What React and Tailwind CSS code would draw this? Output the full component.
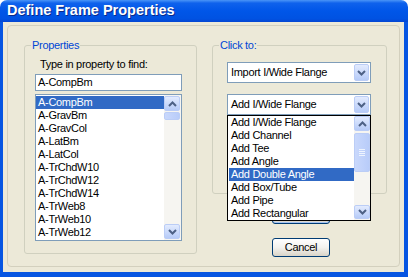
const propertyNames = [
  "A-CompBm",
  "A-GravBm",
  "A-GravCol",
  "A-LatBm",
  "A-LatCol",
  "A-TrChdW10",
  "A-TrChdW12",
  "A-TrChdW14",
  "A-TrWeb8",
  "A-TrWeb10",
  "A-TrWeb12",
];

const addShapes = [
  "Add I/Wide Flange",
  "Add Channel",
  "Add Tee",
  "Add Angle",
  "Add Double Angle",
  "Add Box/Tube",
  "Add Pipe",
  "Add Rectangular",
];

// little XP chevron used on scroll and combo buttons
function Chevron({ up }) {
  return (
    <svg width="9" height="6" viewBox="0 0 9 6">
      <path
        d={up ? "M1 5 L4.5 1.5 L8 5" : "M1 1 L4.5 4.5 L8 1"}
        fill="none"
        stroke="#4D6185"
        strokeWidth="2"
      />
    </svg>
  );
}

function ArrowBox({ up, className = "" }) {
  return (
    <div
      className={
        "flex items-center justify-center rounded-[2px] border border-[#BBCDF6] bg-linear-to-b from-[#E3EBFE] to-[#B6CBF8] " +
        className
      }
    >
      <Chevron up={up} />
    </div>
  );
}

function GroupBox({ title, className = "", children }) {
  return (
    <div className={"flex flex-col rounded-[3px] border border-[#D0D0BF] " + className}>
      <span className="-mt-[7px] ml-[6px] w-fit bg-[#ECE9D8] px-[1px] text-[11px] leading-[13px] text-[#0046D5]">
        {title}
      </span>
      {children}
    </div>
  );
}

function Combo({ text, className = "", children }) {
  return (
    <div
      className={
        "relative flex h-[21px] w-[144px] items-center border border-[#7F9DB9] bg-white pl-[3px] pr-[1px] " +
        className
      }
    >
      <span className="flex-1 text-[11px] leading-[13px]">{text}</span>
      <ArrowBox className="h-[17px] w-[15px]" />
      {children}
    </div>
  );
}

function XpButton({ label, className = "" }) {
  return (
    <div
      className={
        "flex h-[19px] w-[58px] items-center justify-center rounded-[3px] border border-[#003C74] bg-linear-to-b from-[#FFFFFF] via-[#F3F2EE] to-[#D9D4C8] text-[11px] " +
        className
      }
    >
      {label}
    </div>
  );
}

export default function App() {
  return (
    <div
      className="h-[277px] w-[408px] bg-white tracking-[-0.3px] text-black"
      style={{ fontFamily: '"Liberation Sans", Arial, sans-serif' }}
    >
      {/* title bar */}
      <div className="flex h-[22px] items-center rounded-t-[7px] bg-[linear-gradient(180deg,#4A95F7_0%,#0F62EC_14%,#0056E8_50%,#0052E2_85%,#0546D2_100%)] pl-[7px]">
        <span className="text-[14.5px] font-bold tracking-normal text-white [text-shadow:1px_1px_0_#0A2A8A]">
          Define Frame Properties
        </span>
      </div>

      {/* window body */}
      <div className="h-[255px] border-b-[5px] border-l-[3px] border-r-[4px] border-[#0655E2] bg-[#ECE9D8] pl-[4px] pt-[3px]">
        <div className="flex h-[242px] w-[393px] rounded-[4px] border border-[#D3D0BE] pl-[16px] pt-[19px]">
          {/* Properties */}
          <GroupBox title="Properties" className="h-[209px] w-[173px]">
            <span className="ml-[15px] mt-[6px] text-[11px] leading-[13px]">Type in property to find:</span>
            <div className="ml-[10px] mt-[3px] flex h-[17px] w-[147px] items-center border border-[#7F9DB9] bg-white pl-[2px] text-[11px] leading-[13px]">
              A-CompBm
            </div>
            <div className="ml-[10px] mt-[3px] flex h-[147px] w-[147px] border border-[#7F9DB9] bg-white">
              <div className="flex flex-1 flex-col pt-[1px]">
                {propertyNames.map((name, i) => (
                  <div
                    key={name}
                    className={
                      "h-[13px] pl-[2px] text-[11px] leading-[13px] " +
                      (i === 0 ? "bg-[#316AC5] text-white" : "")
                    }
                  >
                    {name}
                  </div>
                ))}
              </div>
              <div className="flex w-[17px] flex-col bg-[#F6F5F1] py-[1px] pr-[1px]">
                <ArrowBox up className="h-[15px] w-[16px]" />
                <div className="mt-[1px] h-[8px] w-[16px] rounded-[2px] border border-[#BBCDF6] bg-linear-to-r from-[#C9D8FC] to-[#B8CCF9]" />
                <div className="flex-1" />
                <ArrowBox className="h-[15px] w-[16px]" />
              </div>
            </div>
          </GroupBox>

          {/* Click to */}
          <div className="ml-[15px] flex flex-col">
            <GroupBox title="Click to:" className="h-[149px] w-[175px]">
              <Combo text="Import I/Wide Flange" className="ml-[14px] mt-[10px]" />
              <Combo text="Add I/Wide Flange" className="z-10 ml-[14px] mt-[11px]">
                {/* open drop-down list */}
                <div className="absolute left-[-1px] top-[20px] flex h-[106px] w-[144px] border border-black bg-white">
                  <div className="flex flex-1 flex-col pl-[1px]">
                    {addShapes.map((name) => (
                      <div
                        key={name}
                        className={
                          "h-[13px] pl-[2px] text-[11px] leading-[13px] " +
                          (name === "Add Double Angle" ? "bg-[#316AC5] text-white" : "")
                        }
                      >
                        {name}
                      </div>
                    ))}
                  </div>
                  <div className="flex w-[16px] flex-col bg-[#F6F5F1]">
                    <ArrowBox up className="h-[15px] w-[16px]" />
                    <div className="mt-[2px] flex h-[39px] w-[16px] flex-col items-center justify-center gap-[1px] rounded-[2px] border border-[#BBCDF6] bg-linear-to-r from-[#C9D8FC] to-[#B8CCF9]">
                      <div className="h-px w-[6px] bg-[#EEF4FE]" />
                      <div className="h-px w-[6px] bg-[#EEF4FE]" />
                      <div className="h-px w-[6px] bg-[#EEF4FE]" />
                      <div className="h-px w-[6px] bg-[#EEF4FE]" />
                    </div>
                    <div className="flex-1" />
                    <ArrowBox className="mb-[1px] h-[14px] w-[16px]" />
                  </div>
                </div>
              </Combo>
            </GroupBox>
            {/* OK button sits under the open list, its caption is hidden */}
            <XpButton label="" className="ml-[60px] mt-[11px] shadow-[inset_0_0_0_1px_#A6C4F2]" />
            <XpButton label="Cancel" className="ml-[60px] mt-[14px]" />
          </div>
        </div>
      </div>
    </div>
  );
}
